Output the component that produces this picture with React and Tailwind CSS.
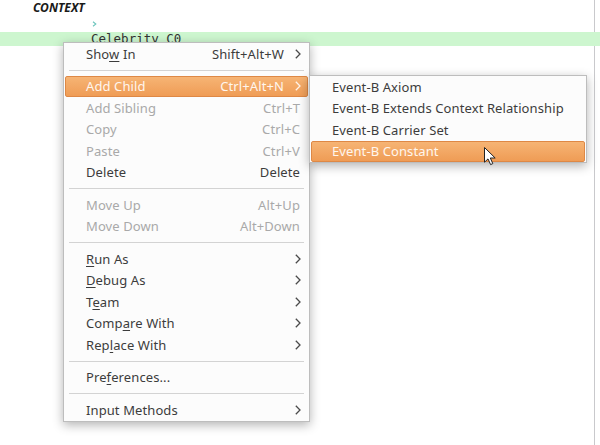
import { Fragment } from 'react'

// Eclipse-style context menu over an Event-B context tree
const mainItems = [
  { label: 'Show In', u: 3, key: 'Shift+Alt+W', sub: true },
  'sep',
  { label: 'Add Child', key: 'Ctrl+Alt+N', sub: true, active: true },
  { label: 'Add Sibling', key: 'Ctrl+T', off: true },
  { label: 'Copy', key: 'Ctrl+C', off: true },
  { label: 'Paste', key: 'Ctrl+V', off: true },
  { label: 'Delete', key: 'Delete' },
  'sep',
  { label: 'Move Up', key: 'Alt+Up', off: true },
  { label: 'Move Down', key: 'Alt+Down', off: true },
  'sep',
  { label: 'Run As', u: 0, sub: true },
  { label: 'Debug As', u: 0, sub: true },
  { label: 'Team', u: 1, sub: true },
  { label: 'Compare With', u: 4, sub: true },
  { label: 'Replace With', u: 3, sub: true },
  'sep',
  { label: 'Preferences...', u: 3 },
  'sep',
  { label: 'Input Methods', sub: true },
]

const subItems = [
  { label: 'Event-B Axiom' },
  { label: 'Event-B Extends Context Relationship' },
  { label: 'Event-B Carrier Set' },
  { label: 'Event-B Constant', active: true },
]

function Arrow({ light }) {
  return (
    <svg width="6" height="10" viewBox="0 0 6 10" fill="none" className="shrink-0">
      <path d="M0.8 0.8L5 5L0.8 9.2" stroke={light ? '#fff4ea' : '#4a4a4a'} strokeWidth="1.3" />
    </svg>
  )
}

function Label({ text, u }) {
  if (u === undefined) return <span>{text}</span>
  return (
    <span>
      {text.slice(0, u)}
      <span className="underline underline-offset-2">{text[u]}</span>
      {text.slice(u + 1)}
    </span>
  )
}

function Row({ item }) {
  const color = item.active ? 'text-[#fff6ee]' : item.off ? 'text-[#a9a9a9]' : 'text-[#3c3c3c]'
  const hi = item.active
    ? 'bg-gradient-to-b from-[#f6b474] to-[#ef9c55] border border-[#de8845] rounded-[2px]'
    : 'border border-transparent'
  return (
    <div className={`h-[21.5px] mx-[1px] flex items-center pl-[20px] ${item.sub ? 'pr-[6px]' : 'pr-[7px]'} ${hi} ${color}`}>
      <div className="flex-1 leading-none pt-[1px] tracking-[0.1px]">
        <Label text={item.label} u={item.u} />
      </div>
      {item.key && <span className="leading-none pt-[1px] tracking-[0.1px]">{item.key}</span>}
      {item.sub && <span className="ml-[11px] flex items-center"><Arrow light={item.active} /></span>}
    </div>
  )
}

export default function App() {
  return (
    <div className="relative w-[600px] h-[445px] bg-white overflow-hidden" style={{ fontFamily: '"Noto Sans", "Open Sans", sans-serif' }}>
      {/* editor page edge */}
      <div className="absolute top-0 bottom-0 left-[594px] w-px bg-[#c9c9cc]" />

      <div className="flex flex-col">
        <div className="h-[16px] pl-[33px] flex items-center text-[12px] font-bold italic text-[#1a1a1a] leading-none">
          CONTEXT
        </div>
        <div className="h-[16px] pl-[92px] flex items-center">
          <svg width="5" height="6" viewBox="0 0 5 6" fill="none">
            <path d="M1 0.8L3.8 3L1 5.2" stroke="#6cc5bd" strokeWidth="1.1" />
          </svg>
        </div>
        <div className="relative h-[14px] bg-[#cdf6cf] pl-[91px] flex items-center text-[12.5px] text-[#333] leading-none" style={{ fontFamily: '"DejaVu Sans Mono", "Liberation Mono", monospace' }}>
          Celebrity C0
        </div>
      </div>

      {/* context menu */}
      <div className="absolute left-[63px] top-[42px] w-[247px] bg-[#fcfcfc] border border-[#bdbdbd] shadow-[0_3px_10px_rgba(0,0,0,0.3)] text-[13px]">
        {mainItems.map((it, i) =>
          it === 'sep' ? (
            <div key={i} className="h-[11px] flex items-center px-[5px]">
              <div className="h-px w-full bg-[#d3d3d3]" />
            </div>
          ) : (
            <Row key={i} item={it} />
          )
        )}
      </div>

      {/* submenu */}
      <div className="absolute left-[309px] top-[75px] w-[278px] bg-[#fcfcfc] border border-[#bdbdbd] shadow-[0_3px_10px_rgba(0,0,0,0.3)] text-[13px]">
        {subItems.map((it, i) => (
          <Fragment key={i}>
            <Row item={it} />
          </Fragment>
        ))}
      </div>

      {/* mouse pointer */}
      <svg className="absolute left-[484px] top-[147px]" width="13" height="19" viewBox="0 0 13 19" fill="none">
        <path d="M0.5 0.5V15.2L4 11.9L6.6 17.6L8.8 16.6L6.3 11H11.2Z" fill="#fff" stroke="#222" strokeWidth="1" strokeLinejoin="round" />
      </svg>
    </div>
  )
}
